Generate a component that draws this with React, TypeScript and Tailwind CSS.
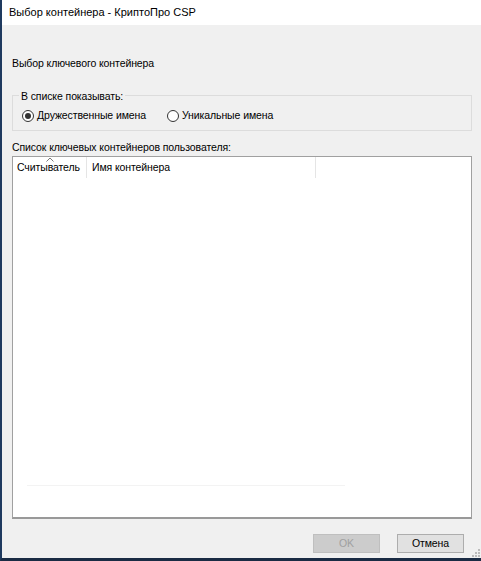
export default function App() {
  return (
    <div
      className="relative w-[481px] h-[561px] flex flex-col border-l-2 border-l-[#1f3a5f] border-b-[3px] border-b-[#1a2b44] text-[10.5px] tracking-[-0.1px] text-black whitespace-nowrap"
      style={{ fontFamily: '"Liberation Sans", Arial, sans-serif' }}
    >
      <div className="h-[25px] bg-white flex items-center pl-[7px] shrink-0 text-[11px] tracking-normal">
        Выбор контейнера - КриптоПро CSP
      </div>

      <div className="flex-1 bg-[#f0f0f0] flex flex-col pl-[10px] pr-[9px] pb-[5px]">
        <div className="mt-[30px] leading-[16px]">Выбор ключевого контейнера</div>

        <div className="relative mt-[24px] h-[36px] border border-[#dcdcdc] flex items-center pl-[9px]">
          <span className="absolute -top-[8px] left-[6px] px-[2px] bg-[#f0f0f0] leading-[16px]">
            В списке показывать:
          </span>
          <label className="flex items-center gap-[3px] mt-[6px] w-[145px]">
            <span className="w-[12px] h-[12px] rounded-full border border-[#333] bg-white flex items-center justify-center">
              <span className="w-[6px] h-[6px] rounded-full bg-[#333]" />
            </span>
            Дружественные имена
          </label>
          <label className="flex items-center gap-[3px] mt-[6px]">
            <span className="w-[12px] h-[12px] rounded-full border border-[#333] bg-white" />
            Уникальные имена
          </label>
        </div>

        <div className="mt-[8px] leading-[16px]">Список ключевых контейнеров пользователя:</div>

        <div className="mt-[1px] flex-1 flex flex-col bg-white border border-[#a0a0a0] border-b-2 border-b-[#999]">
          <div className="relative h-[21px] flex items-center shrink-0">
            <div className="w-[74px] shrink-0 h-full flex items-center pl-[4px] border-r border-[#e5e5e5]">
              Считыватель
            </div>
            <div className="w-[229px] shrink-0 h-full flex items-center pl-[5px] border-r border-[#e5e5e5]">
              Имя контейнера
            </div>
            <svg className="absolute left-[33px] top-[0px]" width="8" height="5" viewBox="0 0 8 5">
              <path d="M0.5 4.5 L4 1 L7.5 4.5" fill="none" stroke="#7a7a7a" strokeWidth="1" />
            </svg>
          </div>
          <div className="flex-1" />
          <div className="ml-[14px] w-[318px] h-px bg-[#f3f3f3] mb-[31px]" />
        </div>

        <div className="mt-[15px] flex justify-end gap-[17px] pr-[8px]">
          <button className="w-[67px] h-[19px] bg-[#cccccc] border border-[#bfbfbf] text-[#a0a0a0] leading-none">
            OK
          </button>
          <button className="w-[67px] h-[19px] bg-[#e1e1e1] border border-[#adadad] leading-none">
            Отмена
          </button>
        </div>
      </div>

      <svg className="absolute right-[1px] bottom-[1px]" width="8" height="8" viewBox="0 0 8 8">
        <rect x="6" y="0" width="2" height="2" fill="#bbb" />
        <rect x="3" y="3" width="2" height="2" fill="#bbb" />
        <rect x="6" y="3" width="2" height="2" fill="#bbb" />
        <rect x="0" y="6" width="2" height="2" fill="#bbb" />
        <rect x="3" y="6" width="2" height="2" fill="#bbb" />
        <rect x="6" y="6" width="2" height="2" fill="#bbb" />
      </svg>
    </div>
  );
}
